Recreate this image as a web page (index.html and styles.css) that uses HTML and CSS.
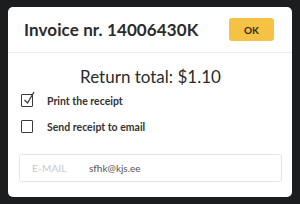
FILE: index.html
```html
<!DOCTYPE html>
<html>
<head>
<meta charset="utf-8">
<link rel="stylesheet" href="styles.css">
</head>
<body>
<div class="modal">
  <div class="header">
    <div class="title">Invoice nr. 14006430K</div>
    <button class="ok">OK</button>
  </div>
  <div class="content">
    <div class="total">Return total: $1.10</div>
    <div class="option">
      <span class="box">
        <svg width="16" height="16" viewBox="0 0 16 16"><path d="M3.5 9 L6.5 12 L13 1" fill="none" stroke="#3a3a3a" stroke-width="1.3"/></svg>
      </span>
      <span class="label">Print the receipt</span>
    </div>
    <div class="option">
      <span class="box"></span>
      <span class="label">Send receipt to email</span>
    </div>
    <div class="field">
      <span class="field-label">E-MAIL</span>
      <span class="field-value">sfhk@kjs.ee</span>
    </div>
  </div>
</div>
</body>
</html>
```
FILE: styles.css
```css
html, body {
  margin: 0;
  padding: 0;
}
body {
  width: 300px;
  height: 204px;
  background: #1b1d1f;
  padding: 7px 8px;
  box-sizing: border-box;
  font-family: Lato, "Open Sans", sans-serif;
}
.modal {
  width: 284px;
  height: 190px;
  background: #fff;
  border-radius: 5px;
  box-sizing: border-box;
}
.header {
  height: 45px;
  display: flex;
  align-items: center;
  justify-content: space-between;
  padding: 0 18px 0 16px;
  border-bottom: 1px solid #ececec;
}
.title {
  font-size: 17px;
  font-weight: 700;
  color: #2b2b2b;
  letter-spacing: 0.1px;
}
.ok {
  width: 45px;
  height: 23px;
  border: none;
  border-radius: 3px;
  background: #f5c243;
  color: #2c2a22;
  font-family: inherit;
  font-weight: 700;
  font-size: 10px;
  padding: 0;
}
.content {
  padding: 14px 10px 0 11px;
}
.total {
  text-align: center;
  font-size: 17px;
  color: #2b2b2b;
  line-height: 20px;
  margin-bottom: 7px;
}
.option {
  display: flex;
  align-items: center;
  height: 13px;
  margin-bottom: 13px;
  padding-left: 2px;
}
.box {
  position: relative;
  width: 12px;
  height: 13px;
  border: 1.2px solid #3a3a3a;
  border-radius: 1px;
  box-sizing: border-box;
  flex: none;
}
.box svg {
  position: absolute;
  left: -1px;
  top: -4px;
}
.label {
  margin-left: 14px;
  font-size: 10.5px;
  font-weight: 700;
  color: #333;
}
.field {
  margin-top: 21px;
  height: 28px;
  border: 1px solid #e4e4e4;
  border-radius: 3px;
  box-sizing: border-box;
  display: flex;
  align-items: center;
  padding-left: 12px;
  font-size: 10px;
}
.field-label {
  color: #c6c6c6;
  width: 57px;
  letter-spacing: 0.2px;
}
.field-value {
  color: #555;
}
```
